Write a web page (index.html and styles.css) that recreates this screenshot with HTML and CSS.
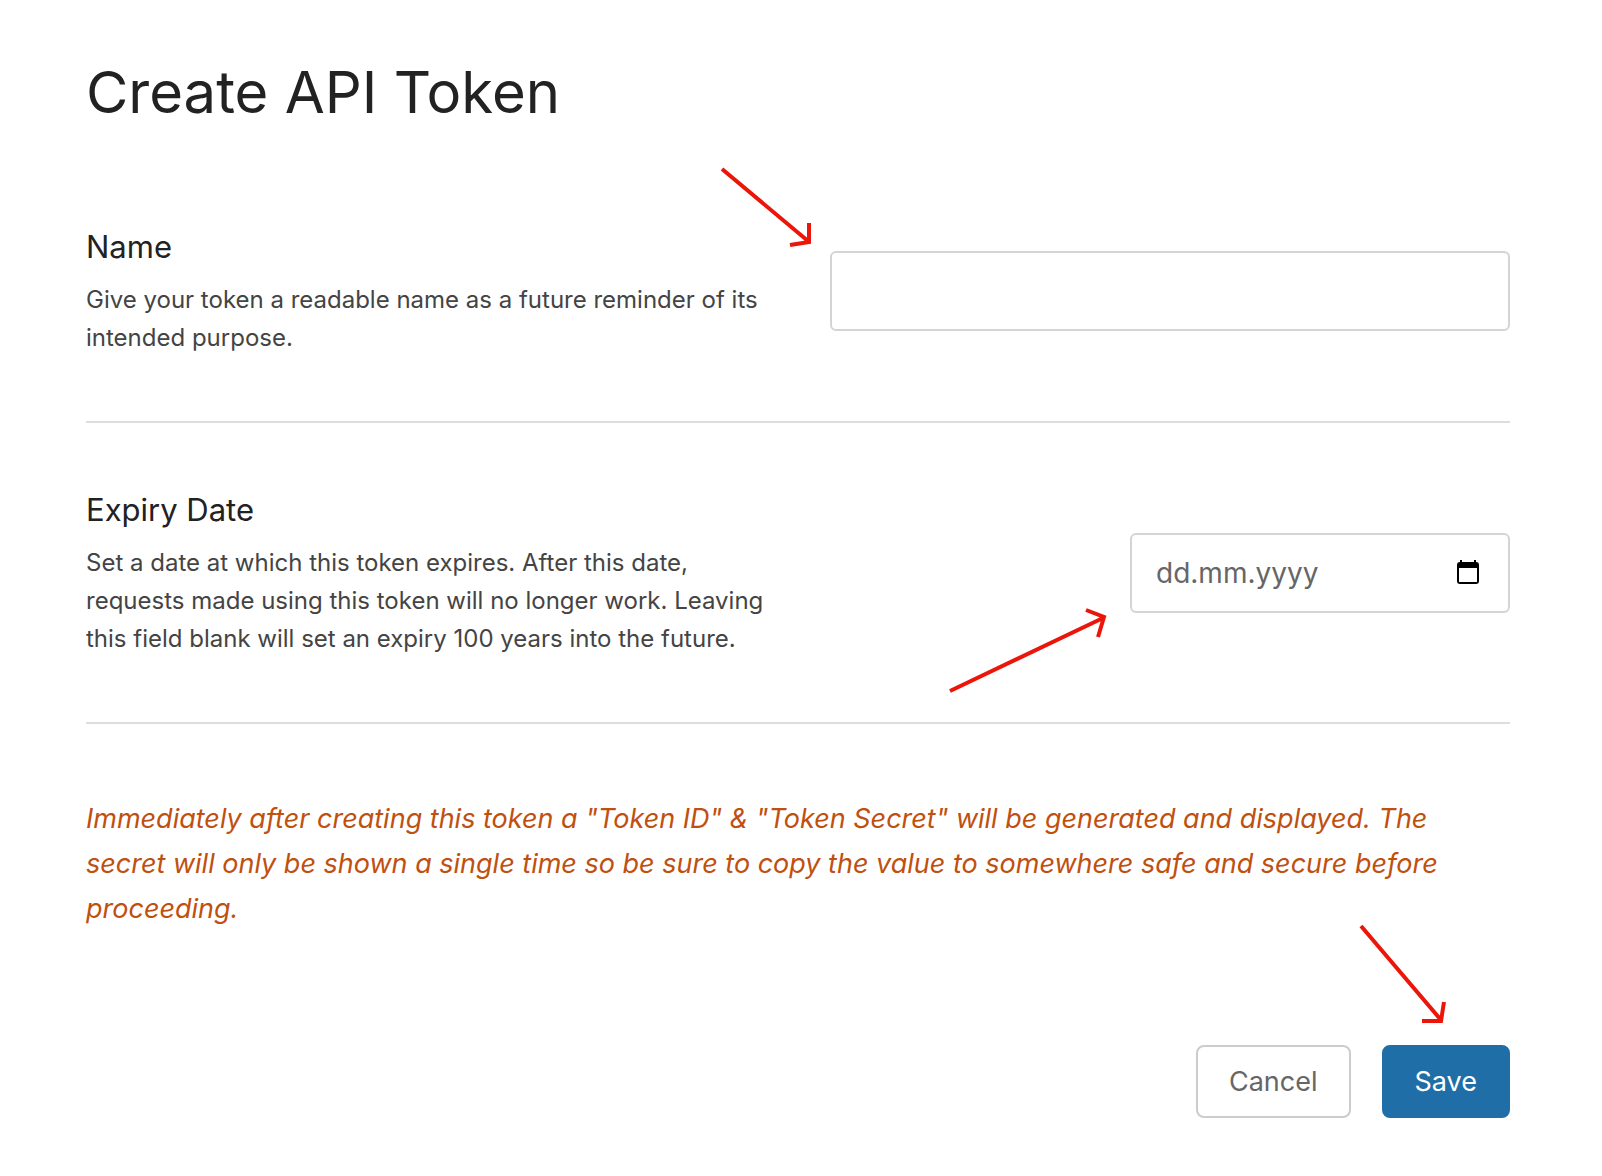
FILE: index.html
```html
<!DOCTYPE html>
<html lang="en">
<head>
    <meta charset="UTF-8">
    <meta name="viewport" content="width=device-width, initial-scale=1.0">
    <title>Create API Token</title>
    <link rel="stylesheet" href="styles.css">
</head>
<body>

<main class="page">
    <h1 class="title">Create API Token</h1>

    <form>
        <div class="row">
            <div class="info">
                <label class="label" for="name">Name</label>
                <p class="help" id="name-help">Give your token a readable name as a future reminder of its intended purpose.</p>
            </div>
            <div class="field">
                <input class="input" type="text" id="name" name="name" aria-describedby="name-help">
                <svg class="arrow arrow-name" width="96" height="84" viewBox="0 0 96 84" aria-hidden="true">
                    <path d="M2 4L88 76M89 58V77L70 80"/>
                </svg>
            </div>
        </div>

        <div class="row">
            <div class="info">
                <label class="label" for="expires">Expiry Date</label>
                <p class="help" id="expires-help">Set a date at which this token expires. After this date, requests made using this token will no longer work. Leaving this field blank will set an expiry 100 years into the future.</p>
            </div>
            <div class="field field-date">
                <input class="input" type="text" id="expires" name="expires_at" placeholder="dd.mm.yyyy" aria-describedby="expires-help">
                <button class="picker" type="button" aria-label="Show date picker">
                    <svg width="22" height="24" viewBox="0 0 22 24">
                        <path fill-rule="evenodd" d="M3 0h2v2h12V0h2v2a3 3 0 0 1 3 3v16a3 3 0 0 1-3 3H3a3 3 0 0 1-3-3V5a3 3 0 0 1 3-3zM2 8v14h18V8z"/>
                    </svg>
                </button>
                <svg class="arrow arrow-date" width="164" height="92" viewBox="0 0 164 92" aria-hidden="true">
                    <path d="M4 86L157 13M140 5L158 12L152 32"/>
                </svg>
            </div>
        </div>

        <p class="warning">Immediately after creating this token a "Token ID" &amp; "Token Secret" will be generated and displayed. The secret will only be shown a single time so be sure to copy the value to somewhere safe and secure before proceeding.</p>

        <div class="actions">
            <button class="button outline" type="button">Cancel</button>
            <div class="save">
                <button class="button primary" type="submit">Save</button>
                <svg class="arrow arrow-save" width="92" height="104" viewBox="0 0 92 104" aria-hidden="true">
                    <path d="M4 4L84 98M87 80L84 99H65"/>
                </svg>
            </div>
        </div>
    </form>
</main>

</body>
</html>
```
FILE: styles.css
```css
* {
    box-sizing: border-box;
}

body {
    margin: 0;
    background-color: #fff;
    color: #222;
    font-family: Inter, "Liberation Sans", sans-serif;
}

.page {
    padding: 52px 92px 56px 86px;
}

.title {
    margin: 0 0 28px;
    font-size: 58px;
    font-weight: 400;
    line-height: 80px;
}

/* form rows */
.row {
    display: grid;
    grid-template-columns: 1fr 1fr;
    gap: 64px;
    align-items: center;
    padding: 64px 0;
    border-bottom: 2px solid #ddd;
}

.label {
    display: block;
    font-size: 31px;
    line-height: 46px;
}

.help {
    margin: 11px 0 0;
    color: #444;
    font-size: 24px;
    line-height: 38px;
}

.field {
    position: relative;
}

.field-date {
    justify-self: end;
    width: 380px;
}

.input {
    display: block;
    width: 100%;
    height: 80px;
    padding: 0 24px;
    border: 2px solid #d4d4d4;
    border-radius: 6px;
    background-color: #fff;
    color: #666;
    font: inherit;
    font-size: 28px;
}

.input::placeholder {
    color: #666;
    opacity: 1;
}

.picker {
    position: absolute;
    top: 27px;
    right: 31px;
    padding: 0;
    border: none;
    background: none;
    cursor: pointer;
}

.picker svg {
    display: block;
}

.warning {
    margin: 72px 0 114px;
    color: #c0500f;
    font-size: 27px;
    font-style: italic;
    line-height: 45px;
}

/* buttons */
.actions {
    display: flex;
    justify-content: flex-end;
    gap: 31px;
}

.save {
    position: relative;
}

.button {
    height: 73px;
    padding: 0 31px;
    border: 2px solid #ccc;
    border-radius: 8px;
    font: inherit;
    font-size: 27px;
    cursor: pointer;
}

.outline {
    background-color: #fff;
    color: #666;
}

.primary {
    border-color: #206ea7;
    background-color: #206ea7;
    color: #fff;
}

/* red pointers */
.arrow {
    position: absolute;
    fill: none;
    stroke: #ec1509;
    stroke-width: 4;
    pointer-events: none;
}

.arrow-name {
    top: -86px;
    left: -110px;
}

.arrow-date {
    top: 72px;
    left: -184px;
}

.arrow-save {
    top: -123px;
    right: 61px;
}
```
